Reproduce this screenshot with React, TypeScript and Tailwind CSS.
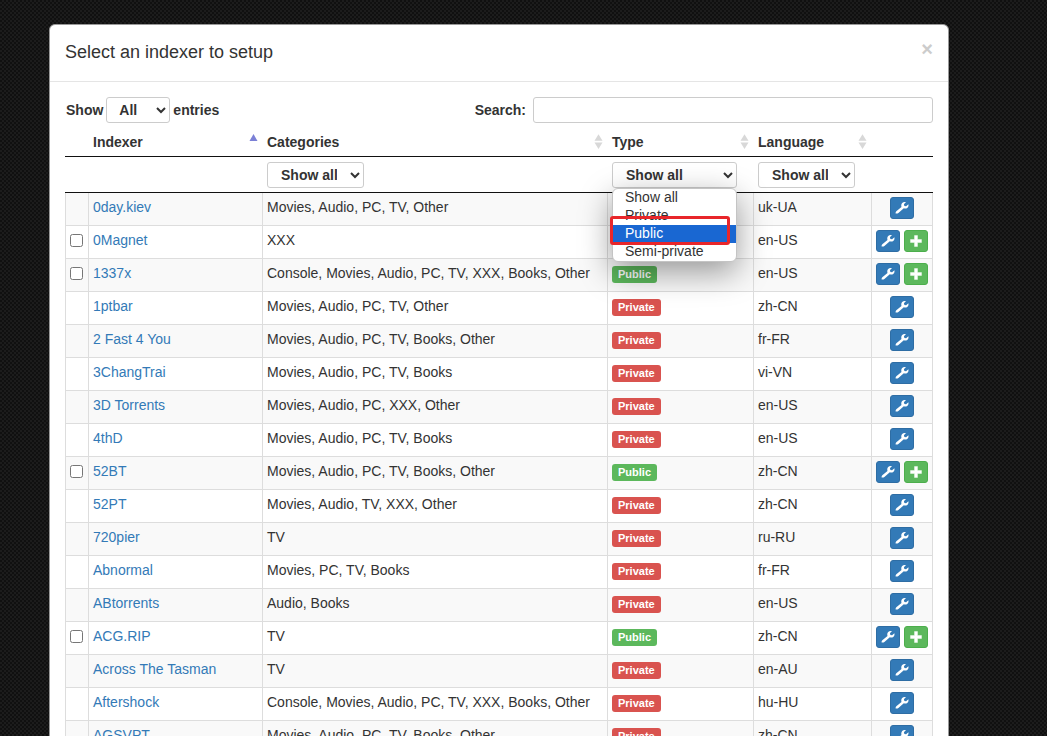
import { useState } from "react";

type IndexerType = "Public" | "Private";

interface Indexer {
  name: string;
  categories: string;
  type: IndexerType;
  language: string;
}

const indexers: Indexer[] = [
  { name: "0day.kiev", categories: "Movies, Audio, PC, TV, Other", type: "Private", language: "uk-UA" },
  { name: "0Magnet", categories: "XXX", type: "Public", language: "en-US" },
  { name: "1337x", categories: "Console, Movies, Audio, PC, TV, XXX, Books, Other", type: "Public", language: "en-US" },
  { name: "1ptbar", categories: "Movies, Audio, PC, TV, Other", type: "Private", language: "zh-CN" },
  { name: "2 Fast 4 You", categories: "Movies, Audio, PC, TV, Books, Other", type: "Private", language: "fr-FR" },
  { name: "3ChangTrai", categories: "Movies, Audio, PC, TV, Books", type: "Private", language: "vi-VN" },
  { name: "3D Torrents", categories: "Movies, Audio, PC, XXX, Other", type: "Private", language: "en-US" },
  { name: "4thD", categories: "Movies, Audio, PC, TV, Books", type: "Private", language: "en-US" },
  { name: "52BT", categories: "Movies, Audio, PC, TV, Books, Other", type: "Public", language: "zh-CN" },
  { name: "52PT", categories: "Movies, Audio, TV, XXX, Other", type: "Private", language: "zh-CN" },
  { name: "720pier", categories: "TV", type: "Private", language: "ru-RU" },
  { name: "Abnormal", categories: "Movies, PC, TV, Books", type: "Private", language: "fr-FR" },
  { name: "ABtorrents", categories: "Audio, Books", type: "Private", language: "en-US" },
  { name: "ACG.RIP", categories: "TV", type: "Public", language: "zh-CN" },
  { name: "Across The Tasman", categories: "TV", type: "Private", language: "en-AU" },
  { name: "Aftershock", categories: "Console, Movies, Audio, PC, TV, XXX, Books, Other", type: "Private", language: "hu-HU" },
  { name: "AGSVPT", categories: "Movies, Audio, PC, TV, Books, Other", type: "Private", language: "zh-CN" },
];

const typeOptions = ["Show all", "Private", "Public", "Semi-private"];

const selectClass =
  "h-[26px] rounded-[3px] border border-[#ccc] bg-white pr-2.5 text-sm font-bold text-[#333]";

function WrenchIcon() {
  return (
    <svg viewBox="0 0 14 14" className="size-3.5" fill="currentColor" aria-hidden="true">
      <path d="M11 1.1 8.900 3.200l.5 1.700 1.700.3 2.300-2c.3 1.600-.1 2.900-1.200 3.700-1 .7-2.200.7-3.400.3l-5.400 4.700c-.7.6-1.800.8-2.800.5-.1-1 .3-1.800 1-2.400L6.500 6.100c-.5-1.500-.2-3 .7-4C8.100 1 9.400.6 11 1.100z" />
    </svg>
  );
}

function PlusIcon() {
  return (
    <svg viewBox="0 0 14 14" className="size-3.5" fill="currentColor" aria-hidden="true">
      <path d="M5.500 1.500h3V5.500h4v3h-4v4h-3v-4h-4v-3h4z" stroke="currentColor" strokeWidth="0.4" strokeLinejoin="round" />
    </svg>
  );
}

function SortIcon({ sorted = false }: { sorted?: boolean }) {
  if (sorted) {
    return (
      <svg viewBox="0 0 9 16" className="h-4 w-[9px] shrink-0" aria-hidden="true">
        <path d="M4.5 0 8.5 7H.5z" fill="#7b80d6" />
      </svg>
    );
  }
  return (
    <svg viewBox="0 0 9 16" className="h-4 w-[9px] shrink-0" fill="#d8d8d8" aria-hidden="true">
      <path d="M4.5.3 8.5 6.800H.5zM.5 8.500h8l-4 6.500z" />
    </svg>
  );
}

function HeaderCell({ label, sorted = false }: { label: string; sorted?: boolean }) {
  return (
    <th className="border-b border-[#111] pt-1 pr-[5px] pb-1 pl-1 text-left font-bold">
      <button type="button" className="flex w-full items-center justify-between font-bold">
        {label}
        <SortIcon sorted={sorted} />
      </button>
    </th>
  );
}

function TypeMenu({ active, onSelect }: { active: string; onSelect: (value: string) => void }) {
  return (
    <div className="absolute top-full left-0 z-10 w-full">
      <ul
        role="listbox"
        aria-label="Type options"
        className="overflow-hidden rounded-md border border-[#c4c4c4] bg-white shadow-[0_10px_32px_rgba(0,0,0,0.4)]"
      >
        {typeOptions.map((option) => (
          <li
            key={option}
            role="option"
            aria-selected={option === active}
            onClick={() => onSelect(option)}
            className={
              option === active
                ? "h-[18px] bg-[#1967d2] pl-3 leading-4 font-normal text-white"
                : "h-[18px] pl-3 leading-4 font-normal text-[#333]"
            }
          >
            {option}
          </li>
        ))}
      </ul>
      <div className="pointer-events-none absolute top-7 -left-0.5 h-[29px] w-[120px] rounded-[3px] border-3 border-[#e8262a]" />
    </div>
  );
}

function IndexerRow({ indexer }: { indexer: Indexer }) {
  const isPublic = indexer.type === "Public";
  return (
    <tr className="h-[33px] align-top odd:bg-[#f9f9f9]">
      <td className="border-x border-b border-[#ddd] pt-2 pl-1">
        {isPublic && (
          <input type="checkbox" aria-label={`Select ${indexer.name}`} className="block size-[13px]" />
        )}
      </td>
      <td className="border-r border-b border-[#ddd] px-1 pt-1">
        <a href="#" className="text-[#337ab7]">
          {indexer.name}
        </a>
      </td>
      <td className="truncate border-r border-b border-[#ddd] px-1 pt-1">{indexer.categories}</td>
      <td className="border-r border-b border-[#ddd] px-1 pt-[7px]">
        <span
          className={
            isPublic
              ? "block w-fit rounded-[3px] bg-[#5cb85c] px-1.5 text-[11px] leading-[17px] font-bold text-white"
              : "block w-fit rounded-[3px] bg-[#d9534f] px-1.5 text-[11px] leading-[17px] font-bold text-white"
          }
        >
          {indexer.type}
        </span>
      </td>
      <td className="border-r border-b border-[#ddd] px-1 pt-1">{indexer.language}</td>
      <td className="border-r border-b border-[#ddd] pt-1">
        <div className="flex justify-center gap-1">
          <button
            type="button"
            aria-label={`Configure ${indexer.name}`}
            className="flex h-[22px] w-6 items-center justify-center rounded-[3px] border border-[#2e6da4] bg-[#337ab7] text-white"
          >
            <WrenchIcon />
          </button>
          {isPublic && (
            <button
              type="button"
              aria-label={`Add ${indexer.name}`}
              className="flex h-[22px] w-6 items-center justify-center rounded-[3px] border border-[#4cae4c] bg-[#5cb85c] text-white"
            >
              <PlusIcon />
            </button>
          )}
        </div>
      </td>
    </tr>
  );
}

export default function App() {
  const [activeType, setActiveType] = useState("Public");

  return (
    <div className="h-screen overflow-hidden bg-[#151515] bg-[repeating-conic-gradient(rgba(255,255,255,0.03)_0_25%,rgba(0,0,0,0.25)_0_50%)] bg-size-[4px_4px] pt-6 pr-[98px] pl-[49px] font-['Liberation_Sans',Arial,sans-serif] text-sm text-[#333]">
      <div role="dialog" aria-labelledby="dialog-title" className="rounded-md border border-[#999] bg-white">
        <div className="flex items-start justify-between border-b border-[#e5e5e5] px-[15px] pt-3.5 pb-4">
          <h4 id="dialog-title" className="text-lg leading-[26px]">
            Select an indexer to setup
          </h4>
          <button type="button" aria-label="Close" className="text-xl leading-5 font-bold text-[#ccc]">
            ×
          </button>
        </div>

        <div className="p-[15px]">
          <div className="flex items-center justify-between font-bold">
            <label className="flex items-center gap-[3px] pl-px">
              Show
              <select className={`${selectClass} w-16 pl-2`}>
                <option>All</option>
                <option>10</option>
                <option>20</option>
              </select>
              entries
            </label>
            <label className="flex items-center gap-[7px]">
              Search:
              <input
                type="search"
                className="h-[26px] w-[400px] rounded-[3px] border border-[#ccc] px-2.5 text-xs font-normal"
              />
            </label>
          </div>

          <table className="mt-[5px] w-full table-fixed border-separate border-spacing-0">
            <colgroup>
              <col className="w-6" />
              <col className="w-[174px]" />
              <col />
              <col className="w-[146px]" />
              <col className="w-[118px]" />
              <col className="w-[61px]" />
            </colgroup>
            <thead>
              <tr>
                <th className="border-b border-[#111]" />
                <HeaderCell label="Indexer" sorted />
                <HeaderCell label="Categories" />
                <HeaderCell label="Type" />
                <HeaderCell label="Language" />
                <th className="border-b border-[#111]" />
              </tr>
              <tr className="text-left">
                <th className="border-b border-[#111]" />
                <th className="border-b border-[#111]" />
                <th className="border-b border-[#111] px-1 pt-[5px] pb-1">
                  <select aria-label="Filter categories" className={`${selectClass} block w-[97px] pl-[9px]`}>
                    <option>Show all</option>
                  </select>
                </th>
                <th className="border-b border-[#111] px-1 pt-[5px] pb-1">
                  <div className="relative w-[125px]">
                    <select aria-label="Filter type" className={`${selectClass} block w-full pl-[9px]`}>
                      <option>Show all</option>
                    </select>
                    <TypeMenu active={activeType} onSelect={setActiveType} />
                  </div>
                </th>
                <th className="border-b border-[#111] px-1 pt-[5px] pb-1">
                  <select aria-label="Filter language" className={`${selectClass} block w-[97px] pl-[9px]`}>
                    <option>Show all</option>
                  </select>
                </th>
                <th className="border-b border-[#111]" />
              </tr>
            </thead>
            <tbody>
              {indexers.map((indexer) => (
                <IndexerRow key={indexer.name} indexer={indexer} />
              ))}
            </tbody>
          </table>
        </div>
      </div>
    </div>
  );
}
